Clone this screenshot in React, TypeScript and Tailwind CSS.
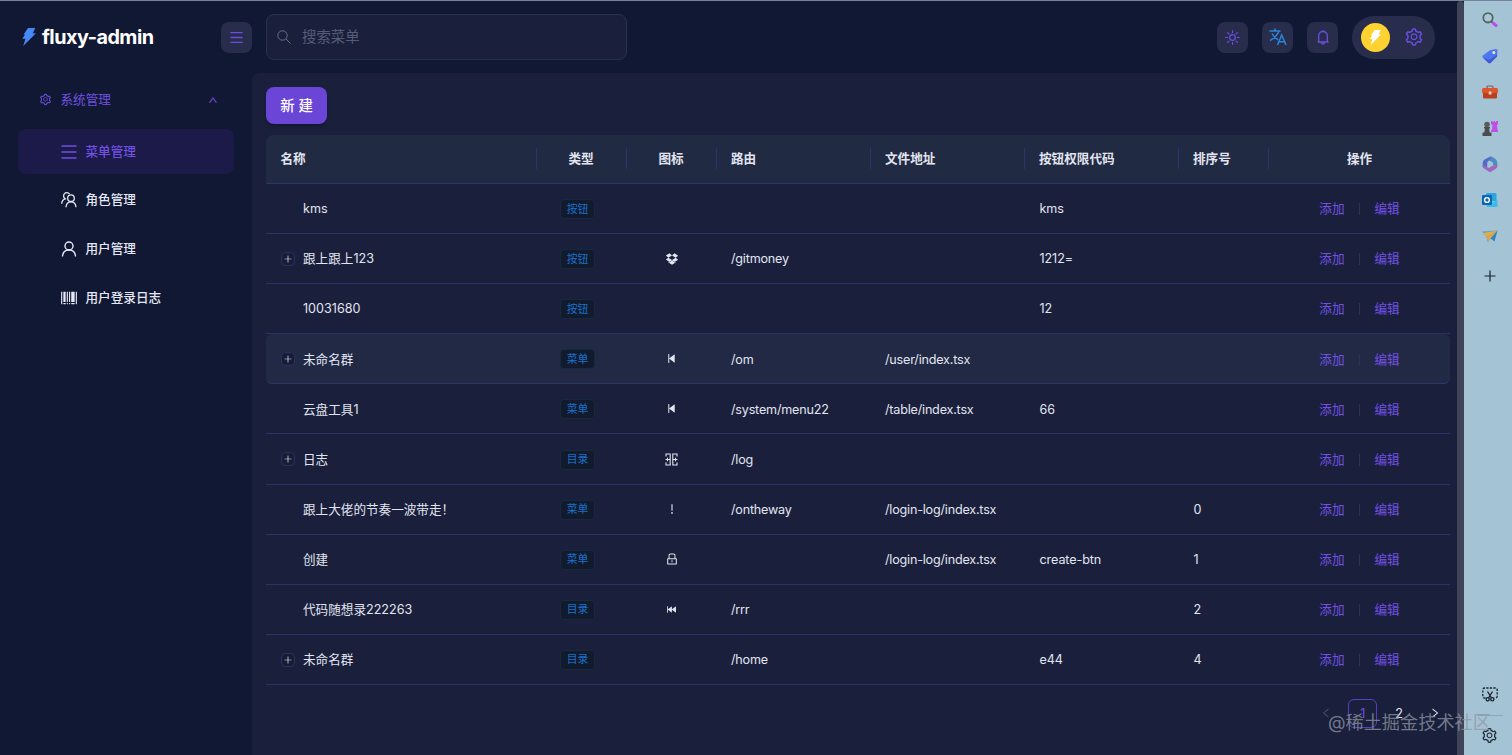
import type { ReactNode } from "react";
import {
  AiOutlineSetting,
  AiOutlineBarcode,
  AiOutlineDropbox,
  AiOutlineStepBackward,
  AiOutlineFastBackward,
  AiOutlineExclamation,
  AiOutlineLock,
  AiOutlinePlus,
  AiOutlineLeft,
  AiOutlineRight,
  AiOutlineUp,
} from "react-icons/ai";

interface menuRow {
  name: string;
  type: string;
  icon?: ReactNode;
  route?: string;
  file?: string;
  code?: string;
  sort?: string;
  expandable?: boolean;
  active?: boolean;
}

function CommandGrid() {
  return (
    <svg width="13" height="13" viewBox="0 0 13 13" fill="none" stroke="currentColor" strokeWidth="1.1">
      <path d="M1 3.500V1h4.200v11H1V9.500M.5 6.500h4.700M2.500 4.800v3.400" />
      <path d="M12 3.500V1H7.800v11H12V9.500M12.500 6.500H7.800M10.500 4.800v3.400" />
    </svg>
  );
}

const rows: menuRow[] = [
  { name: "kms", type: "按钮", code: "kms" },
  { name: "跟上跟上123", type: "按钮", icon: <AiOutlineDropbox size={14} />, route: "/gitmoney", code: "1212=", expandable: true },
  { name: "10031680", type: "按钮", code: "12" },
  { name: "未命名群", type: "菜单", icon: <AiOutlineStepBackward size={13} />, route: "/om", file: "/user/index.tsx", expandable: true, active: true },
  { name: "云盘工具1", type: "菜单", icon: <AiOutlineStepBackward size={13} />, route: "/system/menu22", file: "/table/index.tsx", code: "66" },
  { name: "日志", type: "目录", icon: <CommandGrid />, route: "/log", expandable: true },
  { name: "跟上大佬的节奏一波带走！", type: "菜单", icon: <AiOutlineExclamation size={14} />, route: "/ontheway", file: "/login-log/index.tsx", sort: "0" },
  { name: "创建", type: "菜单", icon: <AiOutlineLock size={14} />, file: "/login-log/index.tsx", code: "create-btn", sort: "1" },
  { name: "代码随想录222263", type: "目录", icon: <AiOutlineFastBackward size={13} />, route: "/rrr", sort: "2" },
  { name: "未命名群", type: "目录", route: "/home", code: "e44", sort: "4", expandable: true },
];

const cols = "grid grid-cols-[270.5px_90px_90px_154px_154px_154px_90.5px_1fr] items-center";

function Bolt({ className }: { className: string }) {
  return (
    <svg viewBox="0 0 14 18" className={className} fill="currentColor">
      <path d="M6 0h7.300l-2.500 5.200h3.100L1.200 18l2.300-7.200H.3L3 6.400H1.600z" />
    </svg>
  );
}

function Users() {
  return (
    <svg width="16" height="16" viewBox="0 0 16 16" fill="none" stroke="currentColor" strokeWidth="1.3">
      <circle cx="10" cy="6.2" r="3.3" />
      <path d="M5 15.200c.2-3.300 2.200-5.400 5-5.400s4.800 2.100 5 5.400M8.500 2.100C7.800 1 6.900.7 5.900.7c-2 0-3.300 1.500-3.300 3.300 0 1.200.6 2.200 1.600 2.800C2 7.500.8 9.300.7 11.700" />
    </svg>
  );
}

function User() {
  return (
    <svg width="16" height="16" viewBox="0 0 16 16" fill="none" stroke="currentColor" strokeWidth="1.4">
      <circle cx="8" cy="5" r="4" />
      <path d="M1.500 15.500C1.700 11.500 4.300 9 8 9s6.300 2.500 6.500 6.500" />
    </svg>
  );
}

function Bars({ size }: { size: number }) {
  return (
    <svg width={size} height={size} viewBox="0 0 16 16" fill="none" stroke="currentColor" strokeWidth="1.6">
      <path d="M.5 2h15M.5 8h15M.5 14h15" />
    </svg>
  );
}

function MenuItem({ icon, label, active }: { icon: ReactNode; label: string; active?: boolean }) {
  return (
    <div
      className={
        active
          ? "flex h-[45px] items-center rounded-lg bg-[#1b1a48] pl-[42px] text-[#7150e2]"
          : "flex h-[45px] items-center pl-[42px] text-[#e6e9f5]"
      }
    >
      <span className="flex w-[17px] justify-center">{icon}</span>
      <span className="ml-[8.5px]">{label}</span>
    </div>
  );
}

function Sidebar() {
  return (
    <aside className="w-[252px] shrink-0 px-[18px] pt-[4px] font-medium">
      <div className="flex h-[45px] items-center pl-[20.500px] pr-[16px] text-[#7150e2]">
        <AiOutlineSetting size={13} />
        <span className="ml-[9px] flex-1 font-normal">系统管理</span>
        <AiOutlineUp size={10} strokeWidth={40} stroke="currentColor" />
      </div>
      <div className="mt-[7px] flex flex-col gap-[3.700px]">
        <MenuItem active icon={<Bars size={16} />} label="菜单管理" />
        <MenuItem icon={<Users />} label="角色管理" />
        <MenuItem icon={<User />} label="用户管理" />
        <MenuItem icon={<AiOutlineBarcode size={18} className="shrink-0" />} label="用户登录日志" />
      </div>
    </aside>
  );
}

function IconButton({ children }: { children: ReactNode }) {
  return (
    <div className="flex size-[31px] items-center justify-center rounded-lg bg-[#272d4b] text-[#6c4de0]">{children}</div>
  );
}

function Header() {
  return (
    <header className="flex h-[72px] shrink-0 items-center">
      <div className="flex w-[221px] items-center pl-[22px]">
        <Bolt className="h-[18px] w-[14px] text-[#4688f5]" />
        <span className="ml-[6px] text-[19.800px] font-bold tracking-[-0.5px] text-white">fluxy-admin</span>
      </div>
      <IconButton>
        <Bars size={13} />
      </IconButton>
      <div className="ml-[14px] flex h-[46px] w-[361px] items-center rounded-lg border border-[#2a3150] bg-[#1a203c] pl-[10px]">
        <svg width="14" height="14" viewBox="0 0 14 14" fill="none" stroke="#6a6f85">
          <circle cx="5.500" cy="5.500" r="4.700" />
          <path d="m9 9 4.500 4.500" />
        </svg>
        <span className="ml-[11px] text-[14.400px] text-[#565c76]">搜索菜单</span>
      </div>
      <div className="ml-auto mr-[22px] flex items-center gap-[14px]">
        <IconButton>
          <svg width="15" height="15" viewBox="0 0 16 16" fill="none" stroke="currentColor" strokeWidth="1.300" strokeLinecap="round">
            <circle cx="8" cy="8" r="3" />
            <path d="M8 .7v2M8 13.300v2M.7 8h2M13.300 8h2M2.800 2.800l1.400 1.400M11.800 11.800l1.400 1.400M2.800 13.200l1.400-1.400M11.800 4.200l1.400-1.400" />
          </svg>
        </IconButton>
        <IconButton>
          <svg width="18" height="18" viewBox="0 0 18 18" fill="none" stroke="#2c84d4" strokeWidth="1.600">
            <path d="M.5 3h11M6 .5V3M10 3C8.500 7 5 10.500 1 12.500M3 5.500c1.300 2.800 3.300 4.800 6 6.300M8.500 17l4.200-10 4.300 10M10 13.700h5.500" />
          </svg>
        </IconButton>
        <IconButton>
          <svg width="14" height="15" viewBox="0 0 14 15" fill="none" stroke="currentColor" strokeWidth="1.300">
            <path d="M2.700 12V5.800a4.300 4.300 0 0 1 8.600 0V12M1.500 12h11M7 0v1.500M5.500 12.500a1.500 1.500 0 0 0 3 0" />
          </svg>
        </IconButton>
        <div className="flex h-[43px] w-[83px] items-center rounded-full bg-[#272d4b] pl-[9px] text-[#6c4de0]">
          <div className="flex size-[29px] items-center justify-center rounded-full bg-[#fdd231]">
            <Bolt className="h-[15px] w-[13px] text-white" />
          </div>
          <AiOutlineSetting size={20} className="ml-[13.500px]" />
        </div>
      </div>
    </header>
  );
}

function HeadCell({ label, center, last }: { label: string; center?: boolean; last?: boolean }) {
  return (
    <div className={last ? "flex h-[21px] items-center" : "flex h-[21px] items-center border-r border-[#2b356b]"}>
      <span className={center ? "w-full text-center" : "pl-[14.500px]"}>{label}</span>
    </div>
  );
}

function Row(props: menuRow) {
  return (
    <div
      className={
        props.active
          ? `${cols} h-[50.1px] rounded-md border-b border-[#2c3769] bg-[#212945]`
          : `${cols} h-[50.1px] border-b border-[#2a3468]`
      }
    >
      <div className="flex items-center pl-[15px] pt-[1.500px]">
        <span className="flex w-[22px]">
          {props.expandable && (
            <span className="-mt-px flex size-[14px] items-center justify-center rounded border border-[#29315f] bg-[#171d37]">
              <AiOutlinePlus size={10} className="shrink-0" />
            </span>
          )}
        </span>
        {props.name}
      </div>
      <div className="flex pl-[23.500px] pt-px">
        <span className="flex h-[20px] w-[35px] items-center justify-center rounded border border-[#15293f] bg-[#111b2d] pt-px text-[10.800px] text-[#1b70cc]">
          {props.type}
        </span>
      </div>
      <div className="flex justify-center">{props.icon}</div>
      <div className="pl-[14.500px] pt-[1.500px] tracking-[-0.2px]">{props.route}</div>
      <div className="pl-[14.500px] pt-[1.500px] tracking-[-0.2px]">{props.file}</div>
      <div className="pl-[15px] pt-[1.500px] tracking-[-0.1px]">{props.code}</div>
      <div className="pl-[15px] pt-[1.500px]">{props.sort}</div>
      <div className="flex items-center justify-center pt-[1.500px] text-[#7150e2]">
        <span>添加</span>
        <span className="mx-[14.500px] h-[12px] w-px bg-[#2d3354]" />
        <span>编辑</span>
      </div>
    </div>
  );
}

function MenuTable() {
  return (
    <div className="mt-[11px] text-[#e2e5f0]">
      <div className={`${cols} h-[49px] rounded-t-lg border-b border-[#2b356b] bg-[#212a43] pb-px font-bold`}>
        <HeadCell label="名称" />
        <HeadCell label="类型" center />
        <HeadCell label="图标" center />
        <HeadCell label="路由" />
        <HeadCell label="文件地址" />
        <HeadCell label="按钮权限代码" />
        <HeadCell label="排序号" />
        <HeadCell label="操作" center last />
      </div>
      {rows.map((row, i) => (
        <Row key={i} {...row} />
      ))}
    </div>
  );
}

function EdgeBar() {
  return (
    <div className="flex w-[48px] shrink-0 flex-col items-center bg-[#a4c4d6] pl-[3px] pt-[11px] text-[#17232e]">
      <div className="flex flex-col gap-[20px]">
        <svg width="16" height="16" viewBox="0 0 16 16" fill="none">
          <circle cx="6" cy="5.800" r="4.700" fill="#a9c9d2" stroke="#53636b" strokeWidth="1.800" />
          <path d="m9.500 9.500 1.500 1.500" stroke="#53636b" strokeWidth="2" />
          <path d="m11.500 11.300 2.500 2.200" stroke="#c04be8" strokeWidth="3" strokeLinecap="round" />
        </svg>
        <svg width="16" height="16" viewBox="0 0 16 16">
          <path d="M8 2.300 14 1q1.500 0 1.500 1.500L15 8.500 8.500 15q-1 .7-2 0L.8 9.500q-.8-1 0-2z" fill="#4d77ef" />
          <path d="m.8 9.500 5.700 5.500q1 .7 2 0L15 8.500l.1-2L7.500 12z" fill="#3e59d2" />
          <circle cx="11.800" cy="4.500" r="1.500" fill="#ffe3a0" />
        </svg>
        <svg width="16" height="16" viewBox="0 0 16 16">
          <path d="M5 4.500V3Q5 2 6 2h4q1 0 1 1v1.500" fill="none" stroke="#765f5b" strokeWidth="1.200" />
          <rect x="0" y="4" width="16" height="5.500" rx="1.500" fill="#de552b" />
          <path d="M1 9h14v4.500q0 1-1 1H2q-1 0-1-1z" fill="#b93f20" />
          <rect x="6.700" y="7.500" width="2.800" height="3" rx=".5" fill="#f3d8c6" />
        </svg>
        <svg width="16" height="16" viewBox="0 0 16 16">
          <path d="M9 1h1.500v1h1V1h1.500v1h1V1H16v3l-1 1 .5 5h1V12H9v-2h1l.5-5L9 4z" fill="#bf4fe8" />
          <circle cx="5" cy="4.500" r="2.800" fill="#5b5b5e" />
          <path d="M2 7h6v1.500H7l.7 4H9.500V16H.5v-3.500h1.800l.7-4H2z" fill="#4c4b4e" />
        </svg>
        <svg width="16" height="16" viewBox="0 0 16 16">
          <path d="M9 .3 3 3.300Q.7 4.500.7 7v4l4.500.5V7q0-1.500 1.500-2.300L9.500 3z" fill="#5469c9" />
          <path d="M9 .3 13.500 3Q15.300 4.500 15.300 7v3.500L11 9V6.500L7 4.500q2-1 2-4.200z" fill="#498fc2" />
          <path d="M15.300 8.500v2q0 1.500-1.500 2.300L9 15.700q-1 .5-2 0L.7 11.500V9l5 2.500q1 .5 2 0L11 9.500z" fill="#9b68bd" />
        </svg>
        <svg width="16" height="16" viewBox="0 0 16 16">
          <rect x="4" y="1" width="10.500" height="8" rx="1" fill="#2da5df" />
          <path d="M4 7.500 10 11l5.500-3.500V14q0 1-1 1H5z" fill="#38bde9" />
          <rect x="0" y="3" width="10" height="10" rx="1" fill="#0c66b2" />
          <circle cx="5" cy="8" r="2.400" fill="none" stroke="#fff" strokeWidth="1.400" />
        </svg>
        <svg width="16" height="16" viewBox="0 0 16 16">
          <path d="m0 3.500 15.500-1L4.500 9z" fill="#59a5c9" />
          <path d="m15.500 2.500-3 11-4-3L6 14 4.500 9z" fill="#2d83c9" />
          <path d="m1.500 5 14-2.500L4.500 9z" fill="#e7ac43" />
          <path d="m4.500 9 11-6.500-7 8L6 14z" fill="#dba74b" />
        </svg>
      </div>
      <svg width="12" height="12" viewBox="0 0 12 12" className="mt-[26px]" fill="none" stroke="currentColor" strokeWidth="1.200">
        <path d="M6 .5v11M.5 6h11" />
      </svg>
      <svg width="16" height="15" viewBox="0 0 16 15" className="mt-auto" fill="none" stroke="currentColor" strokeWidth="1.300">
        <path d="M3.500 11H2.500Q.8 11 .8 9V3Q.8 1 2.800 1h10.400q2 0 2 2v6q0 2-1.700 2h-1" strokeDasharray="2.200 1.300" />
        <path d="m5.500 4.500 4 6.500M10.500 4.500l-4 6.500" />
        <circle cx="5.700" cy="12.300" r="1.600" />
        <circle cx="10.300" cy="12.300" r="1.600" />
      </svg>
      <div className="mb-[11px] mt-[13px] h-px w-[26px] bg-[#8ba8b8]" />
      <AiOutlineSetting size={17} className="mb-[11px] shrink-0" />
    </div>
  );
}

export default function App() {
  return (
    <div className="relative flex h-[755px] w-[1512px] overflow-hidden border-t border-[#76829b] bg-[#111833] font-['Inter','Noto_Sans_CJK_SC',sans-serif] text-[12.600px] leading-[20px]">
      <div className="flex min-w-0 flex-1 flex-col">
        <Header />
        <div className="flex flex-1">
          <Sidebar />
          <main className="min-w-0 flex-1 rounded-tl-lg bg-[#1a203c] pl-[14px] pr-[7px] pt-[14px]">
            <button className="h-[37px] w-[61px] rounded-lg bg-[#6b45d6] text-[14.400px] font-medium text-white shadow-[0_2px_3px_#111831]">
              新 建
            </button>
            <MenuTable />
            <div className="mt-[14px] flex items-center justify-end pr-[9px] text-[#e5e8f3]">
              <AiOutlineLeft size={12} className="text-[#474d68]" />
              <span className="ml-[16px] flex size-[29px] items-center justify-center rounded-md border border-[#563fc0] pt-px text-[#7150e2]">1</span>
              <span className="ml-[18px] pt-px">2</span>
              <AiOutlineRight size={12} className="ml-[26px]" />
            </div>
          </main>
        </div>
      </div>
      <div className="w-[7px] shrink-0 rounded-t bg-[#404459]" />
      <EdgeBar />
      <div className="absolute right-[21px] top-[709px] whitespace-nowrap text-[18.200px] leading-[24px] text-[#8f96a4]/75">
        @稀土掘金技术社区
      </div>
    </div>
  );
}
